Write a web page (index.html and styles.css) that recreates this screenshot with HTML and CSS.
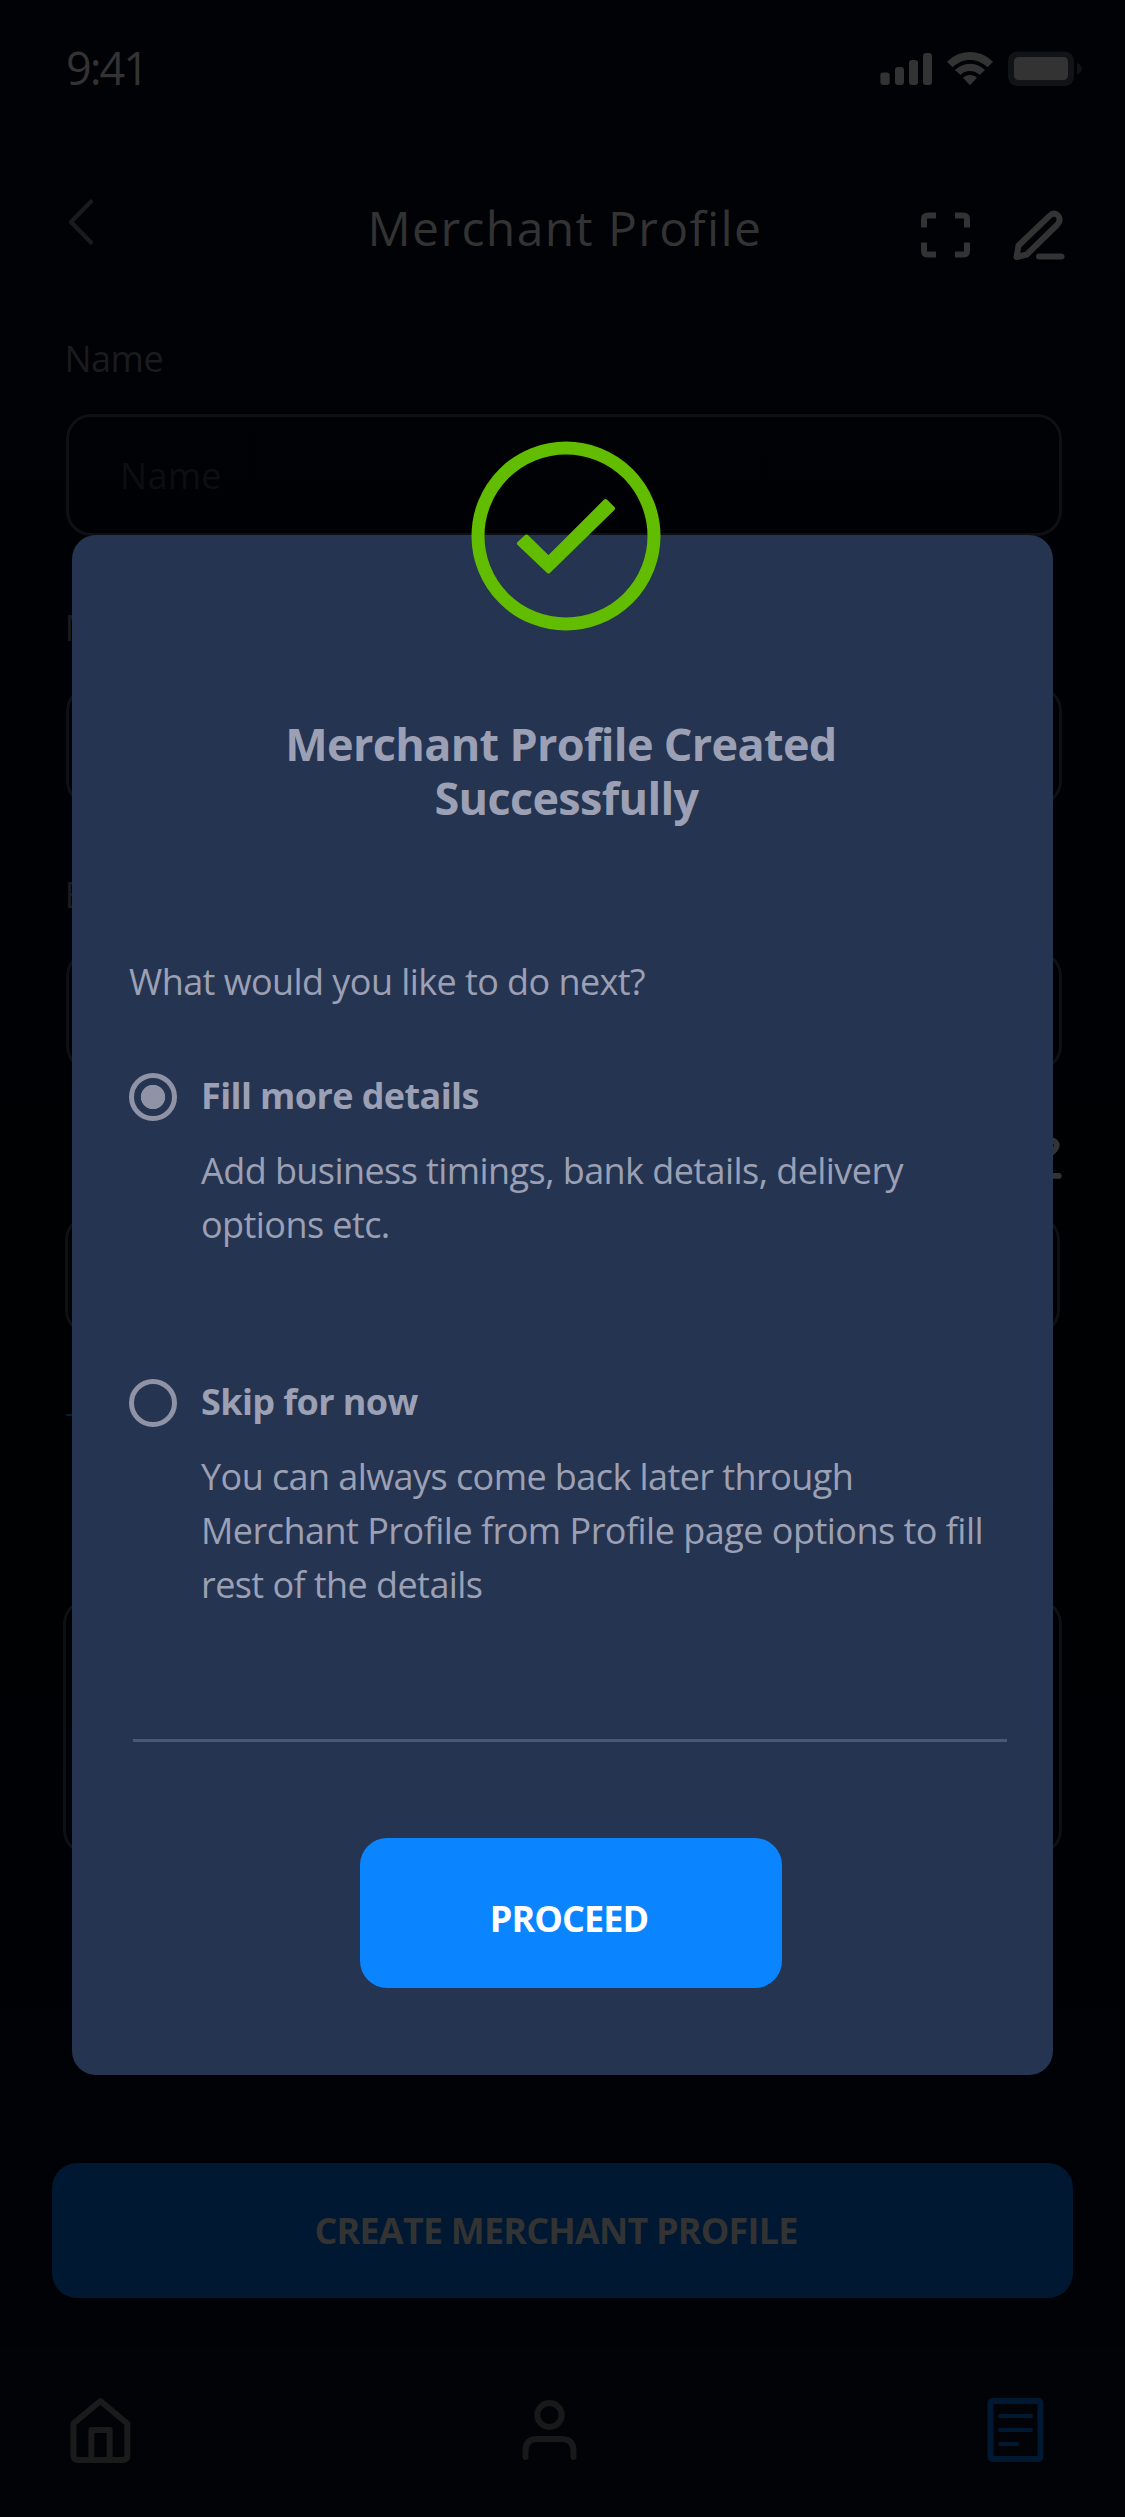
FILE: index.html
```html
<!DOCTYPE html>
<html lang="en">
<head>
<meta charset="utf-8">
<title>Merchant Profile</title>
<link rel="stylesheet" href="styles.css">
</head>
<body>
<div class="screen">
  <div class="status">
    <span class="time">9:41</span>
    <div class="status-icons">
      <svg width="53" height="34" viewBox="0 0 53 34" fill="#333"><rect x="0.3" y="20.5" width="9.4" height="12.5" rx="3"/><rect x="15" y="15" width="9" height="18" rx="3"/><rect x="29" y="8" width="9" height="25" rx="3"/><rect x="43" y="1" width="9" height="32" rx="3"/></svg>
      <svg class="wifi" width="48" height="34" viewBox="0 0 48 34" fill="#333"><path d="M24 0C33 0 41 3.700 47 9.800L41.500 15.300C36.500 10.500 30.500 8 24 8C17.500 8 11.500 10.500 6.500 15.300L1 9.800C7 3.700 15 0 24 0Z"/><path d="M24 11.700C30 11.700 35 14 39 18L33.500 23C31 20.500 27.700 19 24 19C20.300 19 17 20.500 14.500 23L9 18C13 14 18 11.700 24 11.700Z"/><path d="M24 23C26.700 23 29 23.800 31 25.700L24 33.300L17 25.700C19 23.800 21.300 23 24 23Z"/></svg>
      <svg width="75" height="36" viewBox="0 0 75 36"><rect x="0" y="0.500" width="66" height="34.500" rx="9" fill="#121317"/><rect x="6" y="6" width="54" height="23" rx="4.500" fill="#333"/><path d="M69 11.500C72 13 73.800 15 73.800 17.500S72 22 69 23.500Z" fill="#121317"/></svg>
    </div>
  </div>

  <header class="header">
    <svg class="back" width="30" height="50" viewBox="0 0 30 50" fill="none" stroke="#1b1b1e" stroke-width="4.200" stroke-linecap="round" stroke-linejoin="round"><path d="M25 4.500L5 25L25 45.500"/></svg>
    <h1 class="title">Merchant Profile</h1>
    <div class="header-icons">
      <svg width="52" height="48" viewBox="0 0 52 48" fill="none" stroke="#333" stroke-width="6"><path d="M4 17.500V9Q4 5.500 8 5.500H16M35 5.500H43Q47 5.500 47 9V17.500M47 32.500V41Q47 44.500 43 44.500H35M16 44.500H8Q4 44.500 4 41V32.500"/></svg>
      <svg width="54" height="52" viewBox="0 0 54 52" fill="none" stroke="#333" stroke-width="6" stroke-linecap="round" stroke-linejoin="round"><path d="M4.500 47L6.500 35.500L37.500 5.800Q42 1.500 46 5.500Q49.500 9.500 45.500 14.500L14.800 44.500Z"/><path d="M27 46.500H49.500"/></svg>
    </div>
  </header>

  <main class="form">
    <label class="label">Name</label>
    <div class="field field-first">Name</div>
    <label class="label label-mobile">Mobile</label>
    <div class="field"></div>
    <label class="label label-email">Email</label>
    <div class="field field-email"></div>
    <div class="edit-row">
      <svg width="44" height="46" viewBox="0 0 54 54" fill="none" stroke="#333" stroke-width="7" stroke-linecap="round" stroke-linejoin="round"><path d="M4.500 49L6.500 37.500L37.500 7.800Q42 3.500 46 7.500Q49.500 11.500 45.500 16.500L14.800 46.500Z"/><path d="M27 49H50"/></svg>
    </div>
    <div class="field field-address"></div>
    <hr class="section-line">
    <div class="field field-area"></div>
    <button class="create">CREATE MERCHANT PROFILE</button>
  </main>

  <nav class="nav">
    <svg width="66" height="70" viewBox="0 0 66 70" fill="none" stroke="#1b1b1b" stroke-width="6" stroke-linejoin="round"><path d="M6.500 26.500L33.400 4L60.300 26.500V59Q60.300 63 55.500 63H11.300Q6.500 63 6.500 59Z"/><path d="M24.400 63V33H42.600V63"/></svg>
    <svg class="nav-user" width="62" height="66" viewBox="0 0 62 66" fill="none" stroke="#191919" stroke-width="6" stroke-linecap="round"><ellipse cx="31.500" cy="18" rx="12.200" ry="12"/><path d="M7.500 60V54Q7.500 42 19.500 42H43.500Q55.500 42 55.500 54V60"/></svg>
    <svg class="nav-doc" width="62" height="70" viewBox="0 0 62 70" fill="none" stroke="#001831" stroke-linecap="round"><rect x="5.500" y="6" width="50" height="58" rx="2" stroke-width="6"/><path d="M15 21H46M15 35H46M15 49H32" stroke-width="4"/></svg>
  </nav>

  <section class="dialog" role="dialog">
    <svg class="success" width="190" height="190" viewBox="0 0 190 190"><circle cx="95" cy="95" r="88" fill="none" stroke="#62bd00" stroke-width="13"/><path d="M55.500 95.500L77.500 117L134.500 60L142 67.500L77.500 130.500L48 102.500Z" fill="#62bd00" stroke="#62bd00" stroke-width="4" stroke-linejoin="round"/></svg>
    <h2 class="heading">Merchant Profile Created&nbsp;<br>Successfully</h2>
    <p class="question">What would you like to do next?</p>
    <div class="option">
      <span class="radio radio-on"></span>
      <div>
        <h3 class="option-title">Fill more details</h3>
        <p class="option-text">Add business timings, bank details, delivery<br>options etc.</p>
      </div>
    </div>
    <div class="option option-skip">
      <span class="radio"></span>
      <div>
        <h3 class="option-title">Skip for now</h3>
        <p class="option-text">You can always come back later through<br><span class="wide">Merchant Profile from Profile page options to fill</span><br>rest of the details</p>
      </div>
    </div>
    <hr class="divider">
    <button class="proceed">PROCEED</button>
  </section>
</div>
</body>
</html>
```
FILE: styles.css
```css
* { box-sizing: border-box; }
body, h1, h2, h3, p { margin: 0; }
body { background: #000103; font-family: "Open Sans", sans-serif; }
svg { display: block; flex: none; }
hr { border: 0; margin: 0; }
button { border: 0; font-family: inherit; }

.screen {
  position: relative;
  width: 1125px;
  height: 2517px;
  overflow: hidden;
  display: flex;
  flex-direction: column;
  background: linear-gradient(#000206, #000103 1500px, #000206 2250px);
}

.status { display: flex; justify-content: space-between; height: 133px; padding: 0 42px 0 66px; }
.time { font-size: 45px; line-height: 135px; letter-spacing: -2px; color: #333; }
.status-icons { display: flex; align-items: flex-start; padding-top: 51px; }
.status-icons svg { margin-top: 1px; }
.status-icons svg:last-child { margin-top: 0; }
.wifi { margin: 0 14px 0 13px; }

.header { display: flex; height: 188px; padding: 0 59px 0 66px; }
.back { margin-top: 64px; }
.title { margin-left: 271.500px; font-size: 48px; font-weight: 400; line-height: 190px; letter-spacing: 1.4px; color: #333; white-space: nowrap; }
.header-icons { display: flex; gap: 40px; margin-left: auto; padding-top: 77px; }

.form { display: flex; flex-direction: column; padding: 14px 63px 0 66px; }
.label { height: 48px; margin-left: -1.500px; font-size: 36px; line-height: 48px; letter-spacing: -0.5px; color: #1b1b1e; }
.label-mobile { margin-top: 68px; }
.label-email { margin-top: 65px; }
.field { height: 120px; margin-top: 34px; border: 3px solid #0f1013; border-radius: 25px; }
.field-first { height: 122px; margin-top: 31px; padding-left: 51px; font-size: 36px; line-height: 117px; letter-spacing: 0.3px; color: #0d0e11; }
.field-email { margin-top: 32px; }
.edit-row { display: flex; justify-content: flex-end; height: 144px; padding-top: 64px; }
.field-address { width: 995px; margin: 0 0 0 -1px; }
.section-line { width: 900px; height: 2px; margin-top: 79px; background: #001c36; }
.field-area { height: 256px; margin: 183px 0 0 -3px; }
.create { height: 135px; margin: 308px -11px 0 -14px; border-radius: 25px; background: #001831; color: #333; font-size: 36px; font-weight: 700; letter-spacing: -0.820px; padding: 0 13px 0 0; }

.nav { display: flex; align-items: flex-start; flex: 1; margin-top: 50px; padding: 49px 78px 0 67px; background: #020307; justify-content: space-between; }
.nav-user { margin-left: -20px; }
.nav-doc { margin-top: -2px; }

.dialog {
  position: absolute;
  left: 72px;
  top: 535px;
  width: 981px;
  height: 1539.500px;
  padding: 182px 46.500px 0 57px;
  border-radius: 24px;
  background: #253451;
  color: #9ca0b4;
  letter-spacing: -0.570px;
  font-size: 36px;
  line-height: 54px;
  white-space: nowrap;
}
.success { position: absolute; left: 398.500px; top: -94.500px; }
.heading { padding-right: 2.500px; font-size: 45px; font-weight: 700; line-height: 54px; letter-spacing: -0.670px; text-align: center; }
.question { margin-top: 129.500px; }
.option { display: flex; gap: 24px; margin-top: 60.500px; }
.option-skip { margin-top: 123.500px; }
.radio { flex: none; width: 48px; height: 48px; margin-top: 3.500px; border: 5px solid #8f93a5; border-radius: 50%; }
.radio-on { background: radial-gradient(circle, #8f93a5 11.800px, transparent 12.500px); }
.option-title { font-size: 36px; font-weight: 700; letter-spacing: -0.600px; }
.option-text { margin-top: 20.500px; }
.wide { letter-spacing: -0.520px; }
.divider { height: 3px; margin: 127px 0 0 4px; background: #4c5872; }
.proceed { display: block; width: 422px; height: 150px; margin: 96px auto 0 231px; padding: 11px 4px 0 0; border-radius: 27px; background: #0a84ff; color: #fff; font-size: 36px; font-weight: 700; letter-spacing: -0.900px; }
```
